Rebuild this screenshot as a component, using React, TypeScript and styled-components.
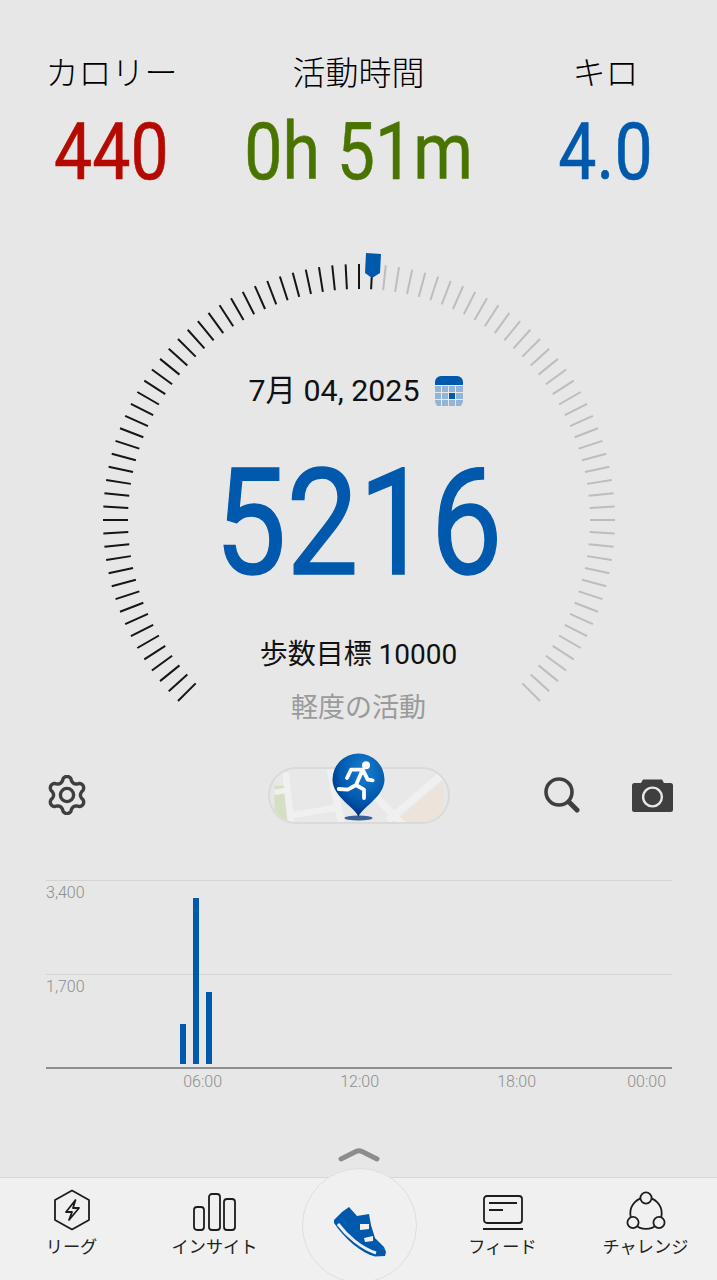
import React from 'react'
import styled, { createGlobalStyle } from 'styled-components'

const BLUE = '#0059ac'

const GlobalStyle = createGlobalStyle`
html, body {
  margin: 0;
  padding: 0;
  background: #e7e7e7;
}
body {
  font-family: 'Roboto', 'Noto Sans CJK JP', sans-serif;
}
`

const stats = [
  { label: 'カロリー', value: '440', color: '#b50a00' },
  { label: '活動時間', value: '0h 51m', color: '#4a7400' },
  { label: 'キロ', value: '4.0', color: BLUE },
]

const TICK_COUNT = 91
const CURRENT_TICK = 46

const Ticks = () => {
  const ticks = []
  for (let i = 0; i < TICK_COUNT; i++) {
    const a = ((-135 + i * 3) * Math.PI) / 180
    const s = Math.sin(a)
    const c = Math.cos(a)
    ticks.push(
      <line
        key={i}
        x1={260 + 231 * s}
        y1={260 - 231 * c}
        x2={260 + 256 * s}
        y2={260 - 256 * c}
        stroke={i <= CURRENT_TICK ? '#151515' : '#bdbdbd'}
        strokeWidth="2"
      />
    )
  }
  return (
    <DialSvg viewBox="0 0 520 470">
      {ticks}
      <path d="M267 -7 L282 -6 L281 13 L273 18 L266 13 Z" fill={BLUE} />
    </DialSvg>
  )
}

// six rounded lobes, one pointing straight up
const gearPath = () => {
  const pts: string[] = []
  for (let i = 0; i < 180; i++) {
    const t = (i / 180) * Math.PI * 2
    const wave = Math.cos(6 * t)
    const r = 16 + 2.6 * Math.sign(wave) * Math.pow(Math.abs(wave), 0.7)
    pts.push(`${(20 + r * Math.sin(t)).toFixed(2)} ${(20 - r * Math.cos(t)).toFixed(2)}`)
  }
  return `M${pts.join(' L')} Z`
}

const GearIcon = () => (
  <svg width="40" height="40" viewBox="0 0 40 40" fill="none" stroke="#3f3f3f" strokeWidth="3.4">
    <path d={gearPath()} strokeLinejoin="round" />
    <circle cx="20" cy="20" r="6.6" />
  </svg>
)

const SearchIcon = () => (
  <svg width="36" height="36" viewBox="0 0 36 36" fill="none" stroke="#3f3f3f">
    <circle cx="15" cy="15" r="13" strokeWidth="3.6" />
    <path d="M25 25 L33 33" strokeWidth="5" strokeLinecap="round" />
  </svg>
)

const CameraIcon = () => (
  <svg width="41" height="33" viewBox="0 0 41 33">
    <path
      fill="#3f3f3f"
      d="M2.5 4 H9 L11 0.5 H30 L32 4 H38.5 A2.5 2.5 0 0 1 41 6.5 V30.5 A2.5 2.5 0 0 1 38.5 33 H2.5 A2.5 2.5 0 0 1 0 30.5 V6.5 A2.5 2.5 0 0 1 2.5 4 Z"
    />
    <circle cx="20.5" cy="18" r="9.4" fill="#3f3f3f" stroke="#e7e7e7" strokeWidth="2.4" />
  </svg>
)

const RunnerPin = () => (
  <PinSvg viewBox="0 0 53 68">
    <defs>
      <radialGradient id="pinFill" cx="0.6" cy="0.28" r="0.85">
        <stop offset="0" stopColor="#1a7fd0" />
        <stop offset="0.55" stopColor="#0059ac" />
        <stop offset="1" stopColor="#001a70" />
      </radialGradient>
    </defs>
    <ellipse cx="26.5" cy="65" rx="14" ry="2.6" fill="#0b3d7c" opacity="0.8" />
    <path d="M26.5 64 C24 55 0.5 44 0.5 26.5 A26 26 0 0 1 52.5 26.5 C52.5 44 29 55 26.5 64 Z" fill="url(#pinFill)" />
    <circle cx="34" cy="12.3" r="4" fill="#fff" />
    <path
      d="M15 25 L19 16.7 L30.7 16.7 L35.7 26.7 L40.7 27.3 M30.5 17 L24 32 L32 36.7 L32 45 M24 32 L15.7 36.7 L6.7 36"
      fill="none"
      stroke="#fff"
      strokeWidth="3.8"
      strokeLinejoin="round"
      strokeLinecap="round"
    />
  </PinSvg>
)

const MapThumb = () => (
  <MapSvg viewBox="0 0 182 57">
    <rect width="182" height="57" fill="#e8e8e8" />
    <path d="M130 57 L182 12 V57 Z" fill="#ece3da" />
    <path d="M0 18 H10 L14 57 H0 Z" fill="#d5dfc4" />
    <path d="M124 57 L134 57 L128 50 Z" fill="#d5dfc4" />
    <path d="M0 25 L13 23" fill="none" stroke="#f0f0f0" strokeWidth="6" />
    <path d="M12 4 L18 57" fill="none" stroke="#f0f0f0" strokeWidth="7" />
    <path d="M17 50 L70 41" fill="none" stroke="#f0f0f0" strokeWidth="7" />
    <path d="M60 0 L72 57" fill="none" stroke="#f0f0f0" strokeWidth="8" />
    <path d="M100 20 L138 60" fill="none" stroke="#f0f0f0" strokeWidth="8" />
    <path d="M122 56 L178 8" fill="none" stroke="#f0f0f0" strokeWidth="8" />
  </MapSvg>
)

const LeagueIcon = () => (
  <svg width="38" height="42" viewBox="0 0 38 42" fill="none" stroke="#1c1c1c">
    <path d="M19 1.5 L36 11 V31 L19 40.5 L2 31 V11 Z" strokeWidth="1.8" strokeLinejoin="round" />
    <path d="M22.5 11 L13 23 H19 L16 31 L26 19 H20 Z" strokeWidth="1.8" strokeLinejoin="round" />
  </svg>
)

const InsightIcon = () => (
  <svg width="44" height="38" viewBox="0 0 44 38" fill="none" stroke="#1c1c1c" strokeWidth="1.8">
    <rect x="1" y="14" width="10" height="23" rx="3" />
    <rect x="16" y="1" width="11" height="36" rx="3" />
    <rect x="31" y="6" width="11" height="31" rx="3" />
  </svg>
)

const ShoeIcon = () => (
  <svg width="54" height="50" viewBox="0 0 54 50">
    <path
      d="M1 13 L9 5 L16 0 L24 9 L36 7 L38 18 L42 31 L51 40 L53 45 L52 49 L42 49.5 C28 46 12 32 1 16 Z"
      fill={BLUE}
    />
    <path d="M5 17 C14 29 28 41 43 46" fill="none" stroke="#f0f0f0" strokeWidth="3" />
    <path d="M27 17 L36 17 L36 22 L27 23 Z M31 31 L40 29 L40 34 L32 35 Z" fill="#f0f0f0" />
  </svg>
)

const FeedIcon = () => (
  <svg width="42" height="36" viewBox="0 0 42 36" fill="none" stroke="#1c1c1c" strokeWidth="1.8">
    <rect x="2" y="1" width="38" height="27" rx="3" />
    <path d="M7 8 H35 M7 15 H21" />
    <path d="M1 34 H41" strokeWidth="2.2" />
  </svg>
)

const ChallengeIcon = () => (
  <svg width="40" height="40" viewBox="0 0 40 40" fill="#f0f0f0" stroke="#1c1c1c" strokeWidth="1.8">
    <circle cx="20" cy="22.2" r="15.7" />
    <circle cx="20" cy="7" r="5.6" />
    <circle cx="7" cy="31.5" r="5.6" />
    <circle cx="33" cy="31.5" r="5.6" />
  </svg>
)

const navLeft = [
  { label: 'リーグ', icon: <LeagueIcon /> },
  { label: 'インサイト', icon: <InsightIcon /> },
]

const navRight = [
  { label: 'フィード', icon: <FeedIcon /> },
  { label: 'チャレンジ', icon: <ChallengeIcon /> },
]

const bars = [40, 166, 72]

const App = () => {
  return (
    <Page>
      <GlobalStyle />
      <StatsRow>
        {stats.map((s) => (
          <Stat key={s.label}>
            <StatLabel>{s.label}</StatLabel>
            <StatValue $color={s.color}>{s.value}</StatValue>
          </Stat>
        ))}
      </StatsRow>

      <Dial>
        <Ticks />
        <DialContent>
          <DateRow>
            <DateText>7月 04, 2025</DateText>
            <Calendar>
              {Array.from({ length: 12 }).map((_, i) => (
                <CalendarCell key={i} $active={i === 6} />
              ))}
            </Calendar>
          </DateRow>
          <Steps>5216</Steps>
          <Goal>歩数目標 10000</Goal>
          <Level>軽度の活動</Level>
        </DialContent>
      </Dial>

      <Toolbar>
        <GearIcon />
        <MapToggle>
          <MapThumb />
          <RunnerPin />
        </MapToggle>
        <ToolbarRight>
          <SearchIcon />
          <CameraIcon />
        </ToolbarRight>
      </Toolbar>

      <Chart>
        <GridBand $height={93}>
          <AxisLabel>3,400</AxisLabel>
        </GridBand>
        <GridBand $height={92}>
          <AxisLabel>1,700</AxisLabel>
          <Bars>
            {bars.map((h) => (
              <Bar key={h} $height={h} />
            ))}
          </Bars>
        </GridBand>
        <TimeAxis>
          <TimeLabel $width={176}>06:00</TimeLabel>
          <TimeLabel $width={157}>12:00</TimeLabel>
          <TimeLabel $width={157}>18:00</TimeLabel>
          <TimeLabel $width={130}>00:00</TimeLabel>
        </TimeAxis>
      </Chart>

      <Chevron viewBox="0 0 44 16">
        <path d="M4 12 L19 4.5 Q22 3 25 4.5 L40 12" fill="none" stroke="#8c8c8c" strokeWidth="5" strokeLinecap="round" />
      </Chevron>

      <Nav>
        {navLeft.map((n) => (
          <NavItem key={n.label}>
            <NavIcon>{n.icon}</NavIcon>
            <NavLabel>{n.label}</NavLabel>
          </NavItem>
        ))}
        <CenterButton>
          <ShoeIcon />
        </CenterButton>
        {navRight.map((n) => (
          <NavItem key={n.label}>
            <NavIcon>{n.icon}</NavIcon>
            <NavLabel>{n.label}</NavLabel>
          </NavItem>
        ))}
      </Nav>
    </Page>
  )
}

export default App

const Page = styled.div`
position: relative;
width: 717px;
height: 1280px;
overflow: hidden;
background: #e7e7e7;
display: flex;
flex-direction: column;
`

const StatsRow = styled.div`
display: grid;
grid-template-columns: 223px 271px 223px;
padding-top: 50px;
`

const Stat = styled.div`
display: flex;
flex-direction: column;
align-items: center;
`

const StatLabel = styled.div`
font-family: 'Noto Sans CJK JP', sans-serif;
font-size: 33px;
font-weight: 300;
line-height: 42px;
color: #000;
`

const StatValue = styled.div<{ $color: string }>`
font-family: 'Roboto', sans-serif;
font-size: 80px;
line-height: 90px;
margin-top: 15px;
white-space: nowrap;
color: ${(p) => p.$color};
transform: scaleX(0.85);
-webkit-text-stroke: 0.6px ${(p) => p.$color};
`

const Dial = styled.div`
display: grid;
justify-content: center;
margin-top: 63px;
height: 470px;
`

const DialSvg = styled.svg`
grid-area: 1 / 1;
width: 520px;
height: 470px;
overflow: visible;
`

const DialContent = styled.div`
grid-area: 1 / 1;
display: flex;
flex-direction: column;
align-items: center;
padding-top: 111px;
`

const DateRow = styled.div`
display: flex;
align-items: center;
gap: 15px;
padding-right: 6px;
`

const DateText = styled.div`
font-size: 30.4px;
line-height: 40px;
color: #111;
`

const Calendar = styled.div`
display: grid;
grid-template-columns: repeat(4, 1fr);
gap: 1px;
width: 28px;
height: 31px;
box-sizing: border-box;
padding-top: 10px;
border-radius: 6px;
overflow: hidden;
background: linear-gradient(${BLUE} 9px, transparent 9px);
`

const CalendarCell = styled.div<{ $active: boolean }>`
height: 6px;
background: ${(p) => (p.$active ? BLUE : '#94b4d6')};
`

const Steps = styled.div`
font-size: 149px;
line-height: 160px;
margin-top: 32px;
color: ${BLUE};
transform: scaleX(0.86);
-webkit-text-stroke: 1.4px ${BLUE};
`

const Goal = styled.div`
font-size: 28px;
line-height: 36px;
margin-top: 34px;
color: #111;
`

const Level = styled.div`
font-size: 27px;
line-height: 36px;
margin-top: 17px;
color: #9a9a9a;
`

const Toolbar = styled.div`
display: flex;
align-items: center;
justify-content: space-between;
padding: 0 44px 0 47px;
height: 60px;
margin-top: 35px;
`

const ToolbarRight = styled.div`
display: flex;
align-items: center;
gap: 52px;
`

const MapToggle = styled.div`
position: relative;
width: 182px;
height: 57px;
margin-left: 86px;
`

const MapSvg = styled.svg`
display: block;
box-sizing: border-box;
width: 182px;
height: 57px;
border: 2px solid #dadada;
border-radius: 29px;
`

const PinSvg = styled.svg`
position: absolute;
left: 64px;
top: -14px;
width: 53px;
height: 68px;
`

const Chart = styled.div`
margin: 55px 45px 0 46px;
`

const GridBand = styled.div<{ $height: number }>`
position: relative;
height: ${(p) => p.$height}px;
border-top: 1px solid #d4d4d4;
`

const AxisLabel = styled.div`
font-size: 16px;
font-weight: 300;
line-height: 22px;
padding-top: 1px;
color: #8e8e8e;
`

const Bars = styled.div`
position: absolute;
left: 134px;
bottom: 3px;
display: flex;
align-items: flex-end;
gap: 7px;
`

const Bar = styled.div<{ $height: number }>`
width: 6px;
height: ${(p) => p.$height}px;
background: ${BLUE};
`

const TimeAxis = styled.div`
display: flex;
border-top: 2px solid #8e8e8e;
padding-top: 2px;
`

const TimeLabel = styled.div<{ $width: number }>`
width: ${(p) => p.$width}px;
text-align: right;
font-size: 16px;
font-weight: 300;
line-height: 22px;
color: #8e8e8e;
`

const Chevron = styled.svg`
position: absolute;
left: 337px;
top: 1147px;
width: 44px;
height: 16px;
`

const Nav = styled.div`
position: absolute;
left: 0;
right: 0;
bottom: 0;
height: 103px;
box-sizing: border-box;
border-top: 1px solid #d6d6d6;
background: #f0f0f0;
display: flex;
`

const NavItem = styled.div`
flex: 0 0 143px;
display: flex;
flex-direction: column;
align-items: center;
padding-top: 11px;
`

const NavIcon = styled.div`
height: 42px;
display: flex;
align-items: flex-end;
`

const NavLabel = styled.div`
font-family: 'Noto Sans CJK JP', sans-serif;
font-size: 17.2px;
line-height: 24px;
margin-top: 3px;
white-space: nowrap;
color: #222;
`

const CenterButton = styled.div`
flex: 0 0 115px;
height: 115px;
margin: -10px 14px 0 16px;
border-radius: 50%;
border: 1.5px solid #dedede;
box-sizing: border-box;
background: #f0f0f0;
display: flex;
align-items: center;
justify-content: center;
padding-top: 12px;
`
